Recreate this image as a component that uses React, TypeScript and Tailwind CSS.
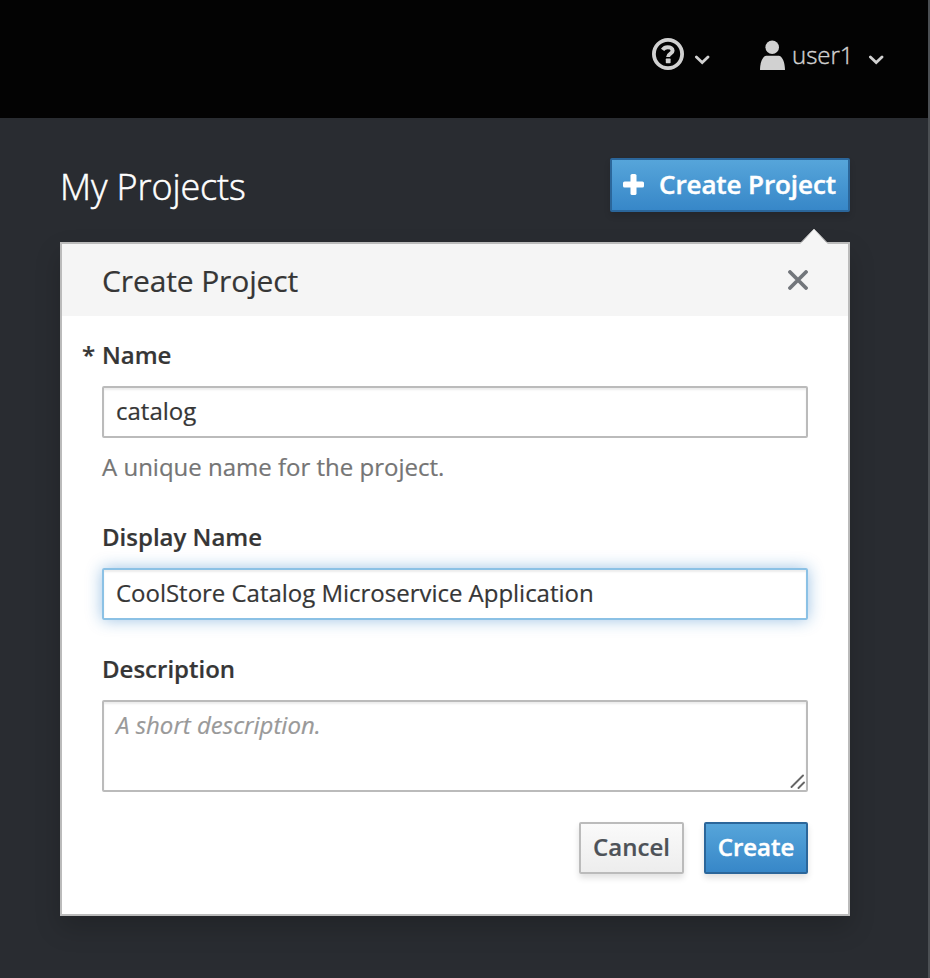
import React from "react";

const primary =
  "rounded-[2px] border-2 border-[#2b669a] bg-linear-to-b from-[#56a5da] to-[#3787c8] font-semibold text-white shadow-[0_4px_6px_rgba(3,3,3,0.12)] [-webkit-text-stroke:0.45px_#fff]";

const field =
  "block w-full rounded-[2px] border-2 px-3 text-2xl text-[#363636] outline-none";

function Chevron() {
  return (
    <svg width="16" height="10" viewBox="0 0 16 10" fill="none" stroke="#d1d1d1" strokeWidth="2.8">
      <path d="M2.4 1.9 8.2 7.5 14 1.9" strokeLinecap="round" />
    </svg>
  );
}

function HelpIcon() {
  return (
    <svg width="32" height="32" viewBox="0 0 32 32" fill="none">
      <circle cx="16" cy="16" r="14.1" stroke="#d1d1d1" strokeWidth="3.8" />
      <path d="M10.6 11.9c1.3-1.8 2.9-2.6 5-2.6 2.9 0 5 1.3 5 3.4 0 3.1-4.5 2.7-4.5 6.2" stroke="#d1d1d1" strokeWidth="4" />
      <rect x="13.8" y="20.6" width="4.8" height="4.6" rx=".6" fill="#d1d1d1" />
    </svg>
  );
}

function UserIcon() {
  return (
    <svg width="26" height="30" viewBox="0 0 26 30" fill="#d1d1d1">
      <circle cx="12.2" cy="7.3" r="6.8" />
      <path d="M0 30c0-6 1.6-10.5 3.4-12.6 1.2-1.4 2.2-1.6 4-1.6h10.2c1.8 0 2.8.2 4 1.6C23.4 19.500 25 24 25 30Z" />
    </svg>
  );
}

export default function App() {
  return (
    <div className="h-[978px] w-[930px] overflow-hidden border-r-2 border-[#4b4f53] bg-[#292c31] font-['Open_Sans','Noto_Sans',sans-serif] text-[#363636] [-webkit-text-stroke:0.2px]">
      <header className="-mr-0.5 flex h-[118px] items-start border-r-2 border-[#2c2c2c] bg-[#030303] pt-[38px] pl-[652px]">
        <HelpIcon />
        <div className="mt-[17px] ml-[10px]"><Chevron /></div>
        <div className="mt-0.5 ml-[50px]"><UserIcon /></div>
        <span className="ml-[6px] w-[62px] text-2xl leading-[34px] font-light whitespace-nowrap text-[#d1d1d1] [-webkit-text-stroke:0.4px]">user1</span>
        <div className="mt-[17px] ml-[14px]"><Chevron /></div>
      </header>

      <main className="px-[60px] pt-10">
        <div className="flex h-[54px] w-[790px] items-center justify-between">
          <h1 className="pt-1 text-[36px] leading-[50px] font-light tracking-[-0.12px] text-white [-webkit-text-stroke:0.5px]">My Projects</h1>
          <button className={`flex h-[54px] w-60 items-center pb-0.5 pl-[11px] text-[26px] tracking-[-0.1px] whitespace-nowrap ${primary}`}>
            <svg className="mr-[15px] shrink-0" width="21" height="21" viewBox="0 0 21 21" fill="#fff">
              <rect x="7.5" width="6" height="21" rx="1.6" />
              <rect y="7.5" width="21" height="6" rx="1.6" />
            </svg>
            Create Project
          </button>
        </div>

        <section className="relative mt-[30px] h-[674px] w-[790px] border-2 border-[#bbb] bg-white shadow-[0_12px_24px_rgba(3,3,3,0.18)]">
          <svg className="absolute -top-4 right-5" width="28" height="17" viewBox="0 0 28 17">
            <path d="M0 17V16L14 1 28 16v1Z" fill="#f5f5f5" />
            <path d="M0 15.5 14 1 28 15.5" fill="none" stroke="#bbb" strokeWidth="1" />
          </svg>
          <div className="flex h-[72px] items-center justify-between bg-[#f5f5f5] pr-10 pl-10">
            <h2 className="pt-0.5 text-[30px] leading-10 tracking-[-0.12px]">Create Project</h2>
            <svg width="20" height="20" viewBox="0 0 20 20" stroke="#72767b" strokeWidth="3.8" strokeLinecap="round">
              <path d="M2 2 18 18M18 2 2 18" />
            </svg>
          </div>

          <form className="px-10 pt-5">
            <label className="-ml-5 flex h-10 text-2xl leading-[38px] font-semibold">
              <span className="w-5">*</span>Name
            </label>
            <input className={`${field} mt-2.5 h-[52px] border-[#bbb] pb-1 shadow-[inset_0_2px_2px_rgba(3,3,3,0.075)]`} defaultValue="catalog" />
            <p className="mt-2.5 h-10 text-2xl leading-[38px] text-[#757575]">A unique name for the project.</p>
            <label className="mt-[30px] block h-10 text-2xl leading-[38px] font-semibold">Display Name</label>
            <input
              className={`${field} mt-2.5 h-[52px] border-[#8bc1e5] pb-1 tracking-[-0.02px] shadow-[inset_0_2px_2px_rgba(3,3,3,0.075),0_0_16px_rgba(20,110,190,0.42)]`}
              defaultValue="CoolStore Catalog Microservice Application"
            />
            <label className="mt-[30px] block h-10 text-2xl leading-[38px] font-semibold">Description</label>
            <div className="relative mt-2.5">
              <textarea
                className={`${field} h-[92px] resize-none overflow-hidden border-[#bbb] leading-[46px] italic shadow-[inset_0_2px_2px_rgba(3,3,3,0.075)] placeholder:text-[#999]`}
                placeholder="A short description."
              />
              <svg className="absolute right-[3px] bottom-[3px]" width="15" height="15" viewBox="0 0 15 15" stroke="#666" strokeWidth="1.9" strokeLinecap="round">
                <path d="M1.5 13 13 1.5M8.5 14 14 8.5" />
              </svg>
            </div>
            <div className="mt-[30px] flex h-[52px] justify-end gap-5">
              <button type="button" className="w-[105px] rounded-[2px] border-2 border-[#bbb] bg-linear-to-b from-[#fafafa] to-[#ededed] pb-0.5 text-2xl font-semibold text-[#4d5258] shadow-[0_4px_6px_rgba(3,3,3,0.12)]">Cancel</button>
              <button type="button" className={`w-[104px] pb-0.5 text-2xl ${primary}`}>Create</button>
            </div>
          </form>
        </section>
      </main>
    </div>
  );
}
